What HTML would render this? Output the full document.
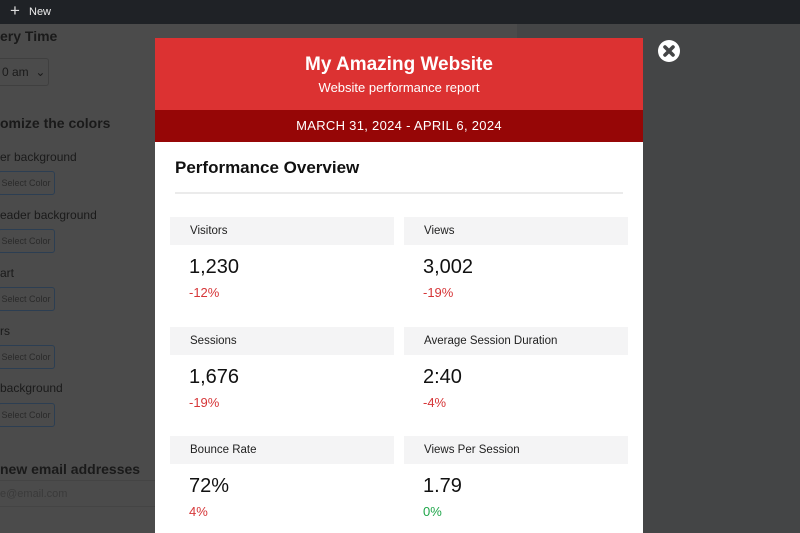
<!DOCTYPE html>
<html><head><meta charset="utf-8"><style>
*{margin:0;padding:0;box-sizing:border-box}
body{width:800px;height:533px;overflow:hidden;background:#444546;font-family:"Liberation Sans",sans-serif;position:relative}
.top{position:absolute;left:0;top:0;width:800px;height:24px;background:#1f2226;color:#eee;font-size:11px}
.top span{position:absolute;left:29px;top:6px}
.top b{position:absolute;left:10px;top:1px;font-size:17px;font-weight:normal;color:#ddd}
.left{position:absolute;left:0;top:24px;width:517px;height:509px;background:#4b4b4b;color:#1a1a1a}
.left div{position:absolute;white-space:nowrap}
.h{font-size:14px;font-weight:bold}
.l{font-size:12px}
.btn{width:57px;height:24px;border:1px solid #2c3e52;border-radius:3px;font-size:9px;color:#2a2a2a;padding:6px 0 0 0;left:-2px}
.modal{position:absolute;left:155px;top:38px;width:488px;height:495px;background:#fff}
.hd{height:72px;background:#dc3232;color:#fff;text-align:center}
.hd h1{font-size:19px;padding-top:16px;font-weight:bold}
.hd p{font-size:13px;margin-top:4px}
.dt{height:32px;background:#960606;color:#fff;text-align:center;font-size:13px;line-height:32px;letter-spacing:.3px}
.po{position:absolute;left:20px;top:120px;font-size:17px;font-weight:bold;color:#111}
.hr{position:absolute;left:20px;top:154px;width:448px;height:2px;background:#ebebeb}
.c{position:absolute;width:224px}
.c .lb{height:28px;background:#f4f4f5;font-size:11.5px;padding:8px 0 0 20px;color:#222}
.c .v{font-size:20px;color:#111;padding:11px 0 0 19px}
.c .p{font-size:13px;color:#d63638;padding:6px 0 0 19px}
.x{position:absolute;left:658px;top:40px;width:22px;height:22px}
</style></head><body>
<div class="top"><b>+</b><span>New</span></div>
<div class="left">
<div class="h" style="left:0;top:4px">ery Time</div>
<div style="left:-5px;top:34px;width:54px;height:28px;border:1px solid #3f3f3f;border-radius:3px;font-size:12px;padding:6px 0 0 6px">0 am &nbsp;⌄</div>
<div class="h" style="left:0;top:91px">omize the colors</div>
<div class="l" style="left:0;top:126px">er background</div>
<div class="btn" style="top:147px">&nbsp;Select Color</div>
<div class="l" style="left:0;top:184px">eader background</div>
<div class="btn" style="top:205px">&nbsp;Select Color</div>
<div class="l" style="left:0;top:242px">art</div>
<div class="btn" style="top:263px">&nbsp;Select Color</div>
<div class="l" style="left:0;top:300px">rs</div>
<div class="btn" style="top:321px">&nbsp;Select Color</div>
<div class="l" style="left:0;top:357px">background</div>
<div class="btn" style="top:379px">&nbsp;Select Color</div>
<div class="h" style="left:0;top:437px">new email addresses</div>
<div style="left:0;top:456px;width:160px;height:27px;border-top:1px solid #444;border-bottom:1px solid #444;font-size:11px;color:#3a3a3a;padding:7px 0 0 0">e@email.com</div>
</div>
<div class="modal">
<div class="hd"><h1>My Amazing Website</h1><p>Website performance report</p></div>
<div class="dt">MARCH 31, 2024 - APRIL 6, 2024</div>
<div class="po">Performance Overview</div>
<div class="hr"></div>
<div class="c" style="left:15px;top:179px"><div class="lb">Visitors</div><div class="v">1,230</div><div class="p">-12%</div></div>
<div class="c" style="left:249px;top:179px"><div class="lb">Views</div><div class="v">3,002</div><div class="p">-19%</div></div>
<div class="c" style="left:15px;top:289px"><div class="lb">Sessions</div><div class="v">1,676</div><div class="p">-19%</div></div>
<div class="c" style="left:249px;top:289px"><div class="lb">Average Session Duration</div><div class="v">2:40</div><div class="p">-4%</div></div>
<div class="c" style="left:15px;top:398px"><div class="lb">Bounce Rate</div><div class="v">72%</div><div class="p">4%</div></div>
<div class="c" style="left:249px;top:398px"><div class="lb">Views Per Session</div><div class="v">1.79</div><div class="p" style="color:#1fa64a">0%</div></div>
</div>
<svg class="x" viewBox="0 0 22 22"><circle cx="11" cy="11" r="11" fill="#fff"/><path d="M7 7L15 15M15 7L7 15" stroke="#444546" stroke-width="3.6" stroke-linecap="round"/></svg>
</body></html>
